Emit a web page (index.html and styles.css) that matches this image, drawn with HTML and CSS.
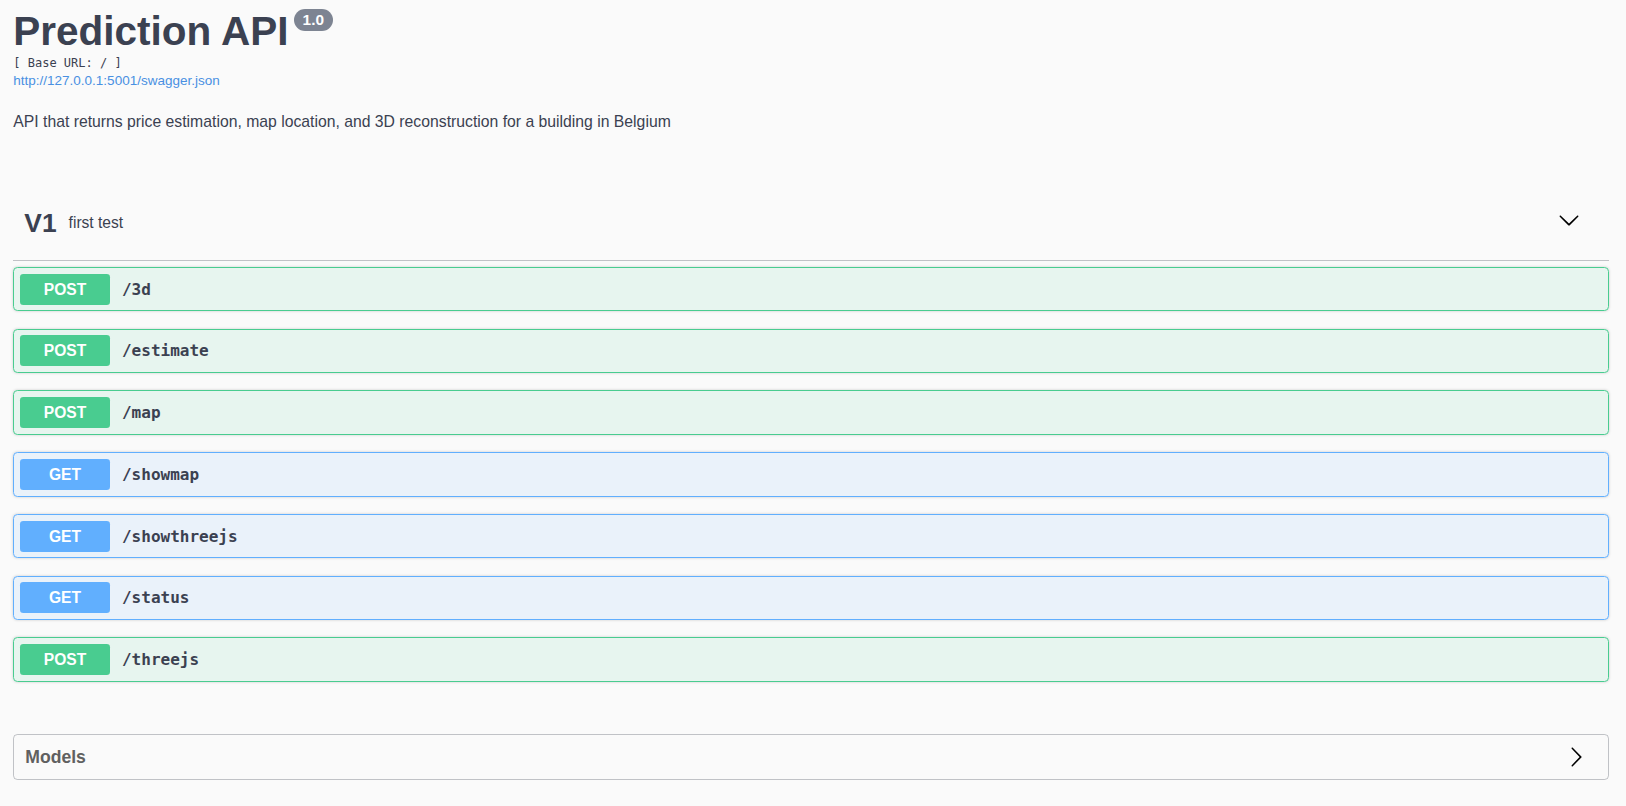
FILE: index.html
```html
<!DOCTYPE html>
<html lang="en">
<head>
<meta charset="utf-8">
<title>Prediction API</title>
<link rel="stylesheet" href="styles.css">
</head>
<body>
<div class="wrapper">
  <div class="info">
    <h2 class="title">Prediction API <span class="version">1.0</span></h2>
    <div class="base-url">[ Base URL: / ]</div>
    <a class="spec-link" href="#">http://127.0.0.1:5001/swagger.json</a>
    <p class="description">API that returns price estimation, map location, and 3D reconstruction for a building in Belgium</p>
  </div>

  <div class="tag-section">
    <h4 class="tag">
      <span class="tag-name">V1</span>
      <small class="tag-desc">first test</small>
      <svg class="arrow" viewBox="0 0 20 20" width="22" height="22"><path d="M17.418 6.109c.272-.268.709-.268.979 0s.271.701 0 .969l-7.908 7.83c-.27.268-.707.268-.979 0l-7.908-7.83c-.27-.268-.27-.701 0-.969.271-.268.709-.268.979 0L10 13.250l7.418-7.141z"/></svg>
    </h4>
    <div class="ops">
      <div class="op op-post"><span class="method">POST</span><span class="path">/3d</span></div>
      <div class="op op-post"><span class="method">POST</span><span class="path">/estimate</span></div>
      <div class="op op-post"><span class="method">POST</span><span class="path">/map</span></div>
      <div class="op op-get"><span class="method">GET</span><span class="path">/showmap</span></div>
      <div class="op op-get"><span class="method">GET</span><span class="path">/showthreejs</span></div>
      <div class="op op-get"><span class="method">GET</span><span class="path">/status</span></div>
      <div class="op op-post"><span class="method">POST</span><span class="path">/threejs</span></div>
    </div>
  </div>

  <section class="models">
    <h4 class="models-title">Models</h4>
    <svg class="arrow-right" viewBox="0 0 20 20" width="22" height="22"><path d="M13.25 10L6.109 2.58c-.268-.27-.268-.707 0-.979.268-.27.701-.27.969 0l7.83 7.908c.268.271.268.709 0 .979l-7.83 7.908c-.268.271-.701.27-.969 0-.268-.269-.268-.707 0-.979L13.25 10z"/></svg>
  </section>
</div>
</body>
</html>
```

FILE: styles.css
```css
html, body {
  margin: 0;
  padding: 0;
  background: #fafafa;
}

body {
  font-family: "Liberation Sans", Arial, sans-serif;
  color: #3b4151;
}

.wrapper {
  padding: 0 16.7px 0 13.3px;
}

.info {
  padding-top: 7px;
  display: flex;
  flex-direction: column;
  align-items: flex-start;
}

.title {
  margin: 0;
  font-size: 40.5px;
  line-height: 48px;
  font-weight: bold;
  color: #3b4151;
  display: flex;
  align-items: flex-start;
}

.version {
  margin: 2.3px 0 0 5px;
  height: 21.5px;
  line-height: 21.5px;
  padding: 0 9px;
  border-radius: 57px;
  background: #7d8492;
  color: #fff;
  font-size: 15.4px;
  font-weight: bold;
}

.base-url {
  margin-top: 1px;
  font-family: "DejaVu Sans Mono", "Liberation Mono", monospace;
  font-size: 12px;
  line-height: 14px;
  color: #3b4151;
}

.spec-link {
  margin-top: 3px;
  font-size: 13.5px;
  line-height: 15px;
  color: #4990e2;
  text-decoration: none;
}

.description {
  margin: 24.2px 0 0;
  font-size: 15.75px;
  line-height: 20px;
  color: #3b4151;
}

.tag-section {
  margin-top: 64.6px;
}

.tag {
  margin: 0;
  display: flex;
  align-items: center;
  padding: 11px 29px 21px 11px;
  border-bottom: 1px solid rgba(59, 65, 81, 0.3);
}

.tag-name {
  font-size: 26.4px;
  line-height: 31px;
  font-weight: bold;
  color: #3b4151;
}

.tag-desc {
  flex: 1;
  padding: 0 11px 0 12px;
  font-size: 15.6px;
  font-weight: normal;
  color: #3b4151;
}

.arrow {
  width: 22px;
  height: 22px;
  margin-bottom: 6px;
  fill: #000;
}

.ops {
  margin-top: 6.3px;
}

.op {
  display: flex;
  align-items: center;
  height: 44.4px;
  box-sizing: border-box;
  padding: 0 5.7px;
  margin-bottom: 17.3px;
  border: 1px solid;
  border-radius: 4.4px;
  box-shadow: 0 0 3px rgba(0, 0, 0, 0.19);
}

.op:last-child {
  margin-bottom: 0;
}

.op-post {
  border-color: #49cc90;
  background: rgba(73, 204, 144, 0.1);
}

.op-get {
  border-color: #61affe;
  background: rgba(97, 175, 254, 0.1);
}

.method {
  width: 90px;
  height: 31px;
  line-height: 31px;
  text-align: center;
  border-radius: 3.3px;
  color: #fff;
  font-size: 15.6px;
  font-weight: bold;
}

.op-post .method {
  background: #49cc90;
}

.op-get .method {
  background: #61affe;
}

.path {
  padding-left: 12px;
  font-family: "DejaVu Sans Mono", "Liberation Mono", monospace;
  font-size: 16px;
  font-weight: bold;
  color: #3b4151;
}

.models {
  margin-top: 52.2px;
  height: 46.4px;
  box-sizing: border-box;
  border: 1px solid rgba(59, 65, 81, 0.3);
  border-radius: 4.4px;
  display: flex;
  align-items: center;
  justify-content: space-between;
  padding: 0 21.5px 0 11px;
}

.models-title {
  margin: 0;
  font-size: 17.6px;
  line-height: 22px;
  font-weight: bold;
  color: #606060;
}

.arrow-right {
  width: 22px;
  height: 22px;
  fill: #000;
}
```
